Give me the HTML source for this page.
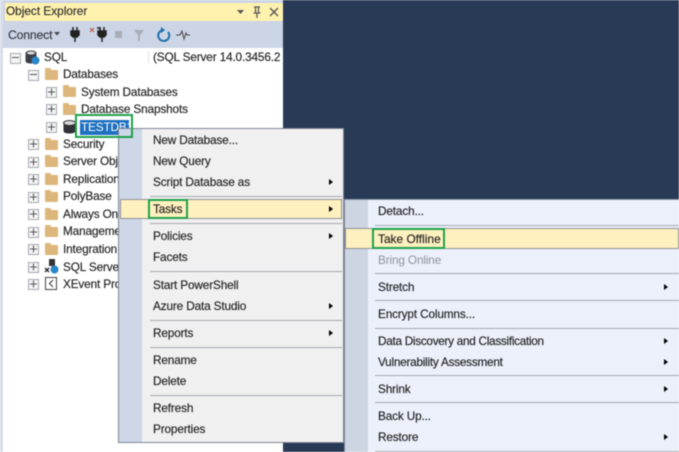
<!DOCTYPE html>
<html><head><meta charset="utf-8">
<style>
html,body{margin:0;padding:0}
#r{position:relative;width:679px;height:452px;overflow:hidden;background:#293a56;font-family:"Liberation Sans",sans-serif;font-size:11.8px;letter-spacing:-.15px;color:#222;filter:blur(.45px)}
#r div{position:absolute}
.t{white-space:nowrap;line-height:16px;height:16px;-webkit-text-stroke:.15px #222}
.sep{height:1px;background:#a4a8ae}
.arr{width:0;height:0;border-left:4.5px solid #000;border-top:3.5px solid transparent;border-bottom:3.5px solid transparent}
.box{width:9px;height:9px;border:1px solid #a3a8b0;background:#f4f4f4}
.f{width:13px;height:10px;background:#dcb67a;border-radius:1px;margin-top:1px}
.f::before{content:"";position:absolute;left:0;top:-2px;width:6px;height:3px;background:#dcb67a;border-radius:1px 1px 0 0}
.g{border:2px solid #1fa14a;box-sizing:border-box}
svg{position:absolute}
</style></head><body><div id="r">

<!-- Explorer panel -->
<div style="left:0;top:0;width:283px;height:452px;background:#fff"></div>
<div style="left:0;top:0;width:283px;height:48px;background:#ccd5e6"></div>
<div style="left:0;top:0;width:3px;height:452px;background:#d8dee9"></div>
<div style="left:5px;top:3px;width:278px;height:18px;background:#fff2ae"></div>
<div class="t" style="left:6px;top:3px;font-size:11.8px;letter-spacing:0;color:#333">Object Explorer</div>
<svg style="left:235px;top:5px" width="48" height="15" viewBox="0 0 48 15"><path d="M2 5h7L5.500 9z" fill="#555"/><path d="M19 2h6M20.500 2v6M23.500 2v6M18.500 8h7M22 8v5" stroke="#555" stroke-width="1.200" fill="none"/><path d="M35 3l8 8M43 3l-8 8" stroke="#555" stroke-width="1.300"/></svg>
<div class="t" style="left:8px;top:27px;font-size:12.2px;color:#3a3f4a">Connect</div>
<svg style="left:54px;top:32px" width="8" height="5"><path d="M0 0h6L3 3.500z" fill="#444"/></svg>
<svg style="left:70px;top:26px" width="120" height="17" viewBox="0 0 120 17">
<path d="M3 1v4M7 1v4M1 5h8v4l-2 2H3L1 9zM5 11v5" stroke="#222" stroke-width="1.500" fill="#222"/>
<path d="M20 2l4 4M24 2l-4 4" stroke="#b5543a" stroke-width="1"/>
<path d="M27 2h3M30 1v4M34 1v4M28 5h8v4l-2 2h-4l-2-2zM32 11v5" stroke="#222" stroke-width="1.500" fill="#222"/>
<rect x="45" y="5" width="7" height="7" fill="#a9adb5"/>
<path d="M64 4h10l-4 5v6h-2V9z" fill="#a9adb5"/>
<path d="M94 4a5.500 5.500 0 1 0 4 2" stroke="#1f6fa8" stroke-width="2" fill="none"/><path d="M91 1l4 3-4 3z" fill="#1f6fa8"/>
<path d="M106 9h4l2-4 2 8 2-6 1 2h3" stroke="#444" stroke-width="1" fill="none"/>
</svg>

<!-- Tree -->
<div class="box" style="left:10px;top:53px"></div><div style="left:12px;top:57px;width:7px;height:1px;background:#555"></div>
<svg style="left:25px;top:49px" width="15" height="16" viewBox="0 0 15 16"><ellipse cx="6" cy="4" rx="5.500" ry="2.500" fill="#444"/><path d="M.5 4v8c0 1.500 2.500 2.500 5.500 2.500S11.500 13.500 11.500 12V4z" fill="#3b3f46"/><ellipse cx="6" cy="4" rx="4" ry="1.500" fill="#ddd"/><circle cx="10.500" cy="11.500" r="4" fill="#2a86c8"/></svg>
<div class="t" style="left:44px;top:49px">SQL</div>
<div class="t" style="left:153px;top:49px;width:130px;overflow:hidden">(SQL Server 14.0.3456.2 - s</div>
<div style="left:148px;top:51px;width:1px;height:12px;background:#e0e0e0"></div>

<div class="box" style="left:28px;top:70px"></div><div style="left:30px;top:74px;width:7px;height:1px;background:#555"></div>
<div class="f" style="left:45px;top:69px"></div><div class="t" style="left:63px;top:66px">Databases</div>

<div class="box" style="left:46px;top:87px"></div><div class="f" style="left:63px;top:86px"></div><div class="t" style="left:81px;top:84px">System Databases</div>
<div class="box" style="left:46px;top:104px"></div><div class="f" style="left:63px;top:104px"></div><div class="t" style="left:81px;top:101px">Database Snapshots</div>
<div class="box" style="left:46px;top:122px"></div>
<svg style="left:63px;top:120px" width="13" height="14" viewBox="0 0 13 14"><path d="M.5 3v8c0 1.500 2.500 2.500 6 2.500s6-1 6-2.500V3z" fill="#2f3238"/><ellipse cx="6.500" cy="3" rx="6" ry="2.500" fill="#d8d8d8" stroke="#333"/></svg>
<div style="left:80px;top:120px;width:49px;height:15px;background:#1d6fc0"></div>
<div class="t" style="left:81px;top:119px;color:#fff;-webkit-text-stroke:0">TESTDB1</div>

<div class="box" style="left:28px;top:139px"></div><div class="f" style="left:45px;top:139px"></div><div class="t" style="left:63px;top:136px">Security</div>
<div class="box" style="left:28px;top:157px"></div><div class="f" style="left:45px;top:156px"></div><div class="t" style="left:63px;top:153px">Server Objects</div>
<div class="box" style="left:28px;top:174px"></div><div class="f" style="left:45px;top:174px"></div><div class="t" style="left:63px;top:171px">Replication</div>
<div class="box" style="left:28px;top:192px"></div><div class="f" style="left:45px;top:191px"></div><div class="t" style="left:63px;top:188px">PolyBase</div>
<div class="box" style="left:28px;top:209px"></div><div class="f" style="left:45px;top:209px"></div><div class="t" style="left:63px;top:206px">Always On</div>
<div class="box" style="left:28px;top:227px"></div><div class="f" style="left:45px;top:226px"></div><div class="t" style="left:63px;top:223px">Management</div>
<div class="box" style="left:28px;top:244px"></div><div class="f" style="left:45px;top:244px"></div><div class="t" style="left:63px;top:241px">Integration</div>
<div class="box" style="left:28px;top:262px"></div>
<svg style="left:44px;top:259px" width="15" height="15" viewBox="0 0 15 15"><rect x="5" y="0" width="6" height="7" fill="#333"/><path d="M1 9l4 4M5 9l-4 4" stroke="#222" stroke-width="1.300"/><circle cx="10.500" cy="10.500" r="4" fill="#2a86c8"/></svg>
<div class="t" style="left:63px;top:259px">SQL Server Agent</div>
<div class="box" style="left:28px;top:279px"></div>
<svg style="left:45px;top:277px" width="12" height="13" viewBox="0 0 12 13"><rect x=".5" y=".5" width="11" height="12" fill="#fff" stroke="#444"/><path d="M8 3L4.500 6.500 8 10" stroke="#333" fill="none"/></svg>
<div class="t" style="left:63px;top:276px">XEvent Profiler</div>

<!-- Context menu -->
<div style="left:118px;top:128px;width:226px;height:315px;box-sizing:border-box;border:1px solid #7d8596;background:#f0f0f0"></div>
<div style="left:119px;top:129px;width:23px;height:313px;background:#cdd7e8"></div>

<div class="g" style="left:75px;top:114px;width:58px;height:24px"></div>

<div class="t" style="left:153px;top:132px">New Database...</div>
<div class="t" style="left:153px;top:153px">New Query</div>
<div class="t" style="left:153px;top:174px">Script Database as</div>
<div class="arr" style="left:329px;top:179px"></div>
<div class="sep" style="left:150px;top:196px;width:192px"></div>

<div style="left:120px;top:199px;width:222px;height:20px;box-sizing:border-box;border:1px solid #8d9096;background:#fff0bf"></div>
<div class="t" style="left:153px;top:201px">Tasks</div>
<div class="arr" style="left:329px;top:206px"></div>
<div class="g" style="left:148px;top:199px;width:40px;height:20px"></div>
<div class="sep" style="left:150px;top:223px;width:192px"></div>

<div class="t" style="left:153px;top:228px">Policies</div>
<div class="arr" style="left:329px;top:233px"></div>
<div class="t" style="left:153px;top:249px">Facets</div>
<div class="sep" style="left:150px;top:271px;width:192px"></div>
<div class="t" style="left:153px;top:277px">Start PowerShell</div>
<div class="t" style="left:153px;top:298px">Azure Data Studio</div>
<div class="arr" style="left:329px;top:303px"></div>
<div class="sep" style="left:150px;top:320px;width:192px"></div>
<div class="t" style="left:153px;top:325px">Reports</div>
<div class="arr" style="left:329px;top:330px"></div>
<div class="sep" style="left:150px;top:347px;width:192px"></div>
<div class="t" style="left:153px;top:352px">Rename</div>
<div class="t" style="left:153px;top:373px">Delete</div>
<div class="sep" style="left:150px;top:395px;width:192px"></div>
<div class="t" style="left:153px;top:400px">Refresh</div>
<div class="t" style="left:153px;top:421px">Properties</div>

<!-- Submenu -->
<div style="left:344px;top:199px;width:335px;height:253px;background:#ebf0fb;border-left:1px solid #7d8596;border-top:1px solid #8e97a8;box-sizing:border-box"></div>
<div style="left:345px;top:200px;width:23px;height:252px;background:#cdd5e3"></div>

<div class="t" style="left:378px;top:203px">Detach...</div>
<div class="sep" style="left:375px;top:225px;width:304px"></div>
<div style="left:345px;top:228px;width:334px;height:21px;box-sizing:border-box;border:1px solid #8d9096;background:#fff0bf"></div>
<div class="t" style="left:378px;top:231px;letter-spacing:.05px">Take Offline</div>
<div class="g" style="left:372px;top:228px;width:73px;height:21px"></div>
<div class="t" style="left:378px;top:252px;color:#8d929c;-webkit-text-stroke:0">Bring Online</div>
<div class="sep" style="left:375px;top:273px;width:304px"></div>
<div class="t" style="left:378px;top:279px">Stretch</div>
<div class="arr" style="left:664px;top:284px"></div>
<div class="sep" style="left:375px;top:300px;width:304px"></div>
<div class="t" style="left:378px;top:306px">Encrypt Columns...</div>
<div class="sep" style="left:375px;top:328px;width:304px"></div>
<div class="t" style="left:378px;top:333px;letter-spacing:-.3px">Data Discovery and Classification</div>
<div class="arr" style="left:664px;top:338px"></div>
<div class="t" style="left:378px;top:354px;letter-spacing:-.25px">Vulnerability Assessment</div>
<div class="arr" style="left:664px;top:359px"></div>
<div class="sep" style="left:375px;top:375px;width:304px"></div>
<div class="t" style="left:378px;top:381px">Shrink</div>
<div class="arr" style="left:664px;top:386px"></div>
<div class="sep" style="left:375px;top:402px;width:304px"></div>
<div class="t" style="left:378px;top:408px">Back Up...</div>
<div class="t" style="left:378px;top:429px">Restore</div>
<div class="arr" style="left:664px;top:434px"></div>
<div class="sep" style="left:375px;top:451px;width:304px"></div>

<!-- plus marks for tree boxes -->
<svg style="left:0;top:0" width="60" height="300">
<g stroke="#555" stroke-width="1" fill="none">
<path d="M48 92h7M51.500 88.500v7M48 109h7M51.500 105.500v7M48 127h7M51.500 123.500v7"/>
<path d="M30 144h7M33.500 140.500v7M30 162h7M33.500 158.500v7M30 179h7M33.500 175.500v7M30 197h7M33.500 193.500v7M30 214h7M33.500 210.500v7M30 232h7M33.500 228.500v7M30 249h7M33.500 245.500v7M30 267h7M33.500 263.500v7M30 284h7M33.500 280.500v7"/>
</g></svg>
</div></body></html>
